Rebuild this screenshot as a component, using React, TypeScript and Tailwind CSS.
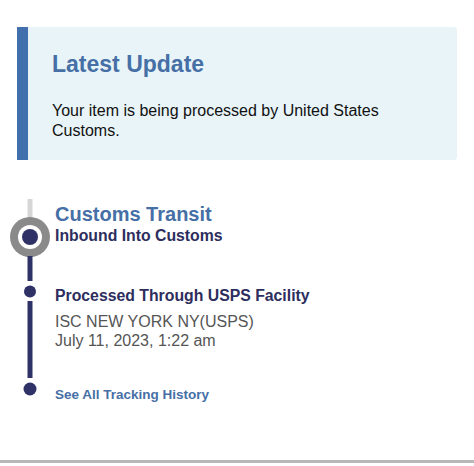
type TimelineEvent = {
  title: string;
  lines: string[];
};

const latest = {
  heading: "Latest Update",
  body: "Your item is being processed by United States Customs.",
};

const processed: TimelineEvent = {
  title: "Processed Through USPS Facility",
  lines: ["ISC NEW YORK NY(USPS)", "July 11, 2023, 1:22 am"],
};

function TimelineTrack() {
  return (
    <svg width="55" height="205" viewBox="0 0 55 205" className="block">
      <line x1="30" y1="5" x2="30" y2="28" stroke="#d6d6d6" strokeWidth="5" />
      <circle cx="30" cy="43" r="20" fill="#8a8a8a" />
      <circle cx="30" cy="43" r="12" fill="#ffffff" />
      <circle cx="30" cy="43" r="8" fill="#2f3267" />
      <line x1="30" y1="62" x2="30" y2="87" stroke="#2f3267" strokeWidth="5" />
      <circle cx="30" cy="97.5" r="6" fill="#2f3267" />
      <line x1="30" y1="107" x2="30" y2="184" stroke="#2f3267" strokeWidth="5" />
      <circle cx="30" cy="195" r="6.5" fill="#2f3267" />
    </svg>
  );
}

export default function App() {
  return (
    <div
      className="flex h-[466px] w-[474px] flex-col bg-white"
      style={{ fontFamily: '"Liberation Sans", Arial, sans-serif' }}
    >
      <section className="ml-[17px] mt-[27px] w-[440px] rounded-r-[3px] border-l-[11px] border-[#4270ad] bg-[#e8f4f8] pb-[19px] pl-[24px] pr-[24px] pt-[23px]">
        <h2 className="text-[23px] font-bold leading-[28px] text-[#466fa6]">{latest.heading}</h2>
        <p className="mt-[23px] text-[16px] leading-[20px] text-[#111111]">{latest.body}</p>
      </section>

      <div className="mt-[34px] grid grid-cols-[55px_1fr]">
        <TimelineTrack />
        <div className="pt-[8px]">
          <h3 className="text-[20px] font-bold leading-[24px] text-[#466fa6]">Customs Transit</h3>
          <p className="text-[15.8px] font-bold leading-[19px] text-[#2d2e5e]">Inbound Into Customs</p>

          <div className="mt-[41px]">
            <p className="text-[15.8px] font-bold leading-[19px] text-[#2d2e5e]">{processed.title}</p>
            <div className="mt-[7px] text-[16px] leading-[19px] text-[#555555]">
              {processed.lines.map((line) => (
                <p key={line}>{line}</p>
              ))}
            </div>
          </div>

          <a href="#" className="mt-[36px] block text-[13.5px] font-bold leading-[17px] text-[#466fa6]">
            See All Tracking History
          </a>
        </div>
      </div>

      <div className="mb-[3px] mt-auto h-[3px] w-full bg-[#b8b8b8]" />
    </div>
  );
}
